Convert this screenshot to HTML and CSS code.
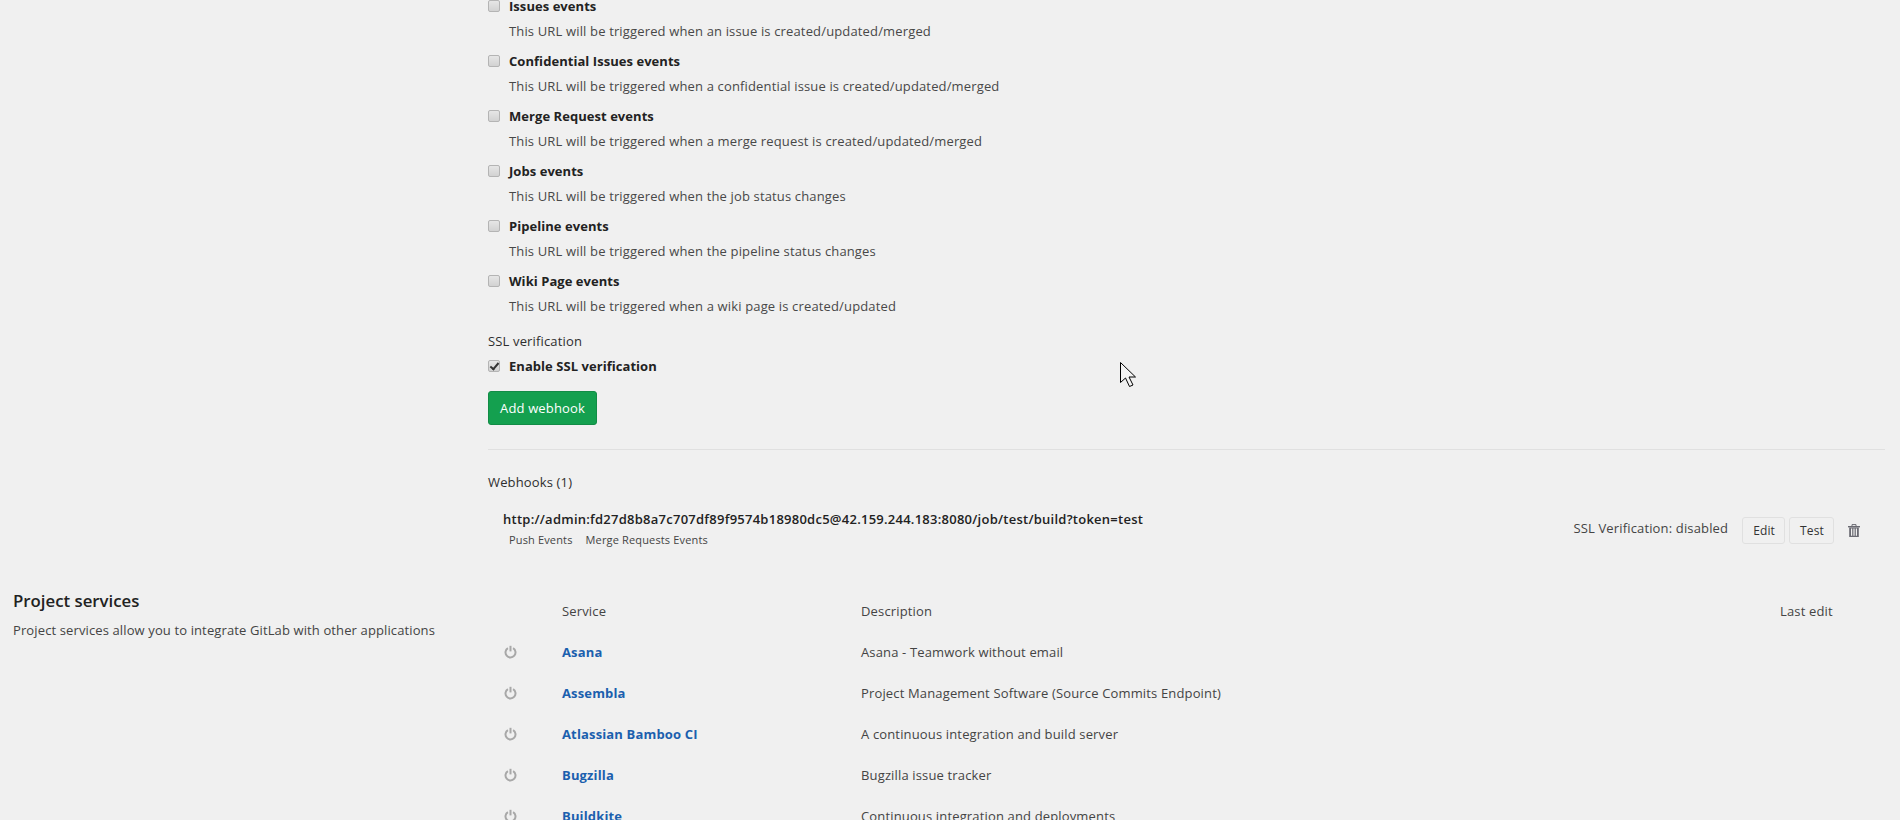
FILE: index.html
```html
<!DOCTYPE html>
<html lang="en">
<head>
    <meta charset="UTF-8">
    <meta name="viewport" content="width=device-width, initial-scale=1.0">
    <title>Integrations</title>
    <link rel="stylesheet" href="styles.css">
</head>
<body>

<div class="page">
    <form class="hook-form">
        <div class="event">
            <label><input type="checkbox"> Issues events</label>
            <p class="help">This URL will be triggered when an issue is created/updated/merged</p>
        </div>
        <div class="event">
            <label><input type="checkbox"> Confidential Issues events</label>
            <p class="help">This URL will be triggered when a confidential issue is created/updated/merged</p>
        </div>
        <div class="event">
            <label><input type="checkbox"> Merge Request events</label>
            <p class="help">This URL will be triggered when a merge request is created/updated/merged</p>
        </div>
        <div class="event">
            <label><input type="checkbox"> Jobs events</label>
            <p class="help">This URL will be triggered when the job status changes</p>
        </div>
        <div class="event">
            <label><input type="checkbox"> Pipeline events</label>
            <p class="help">This URL will be triggered when the pipeline status changes</p>
        </div>
        <div class="event">
            <label><input type="checkbox"> Wiki Page events</label>
            <p class="help">This URL will be triggered when a wiki page is created/updated</p>
        </div>

        <div class="ssl-title">SSL verification</div>
        <label><input type="checkbox" checked> Enable SSL verification</label>

        <button type="button" class="btn-create">Add webhook</button>
    </form>

    <hr class="divider">

    <div class="hooks">
        <h5>Webhooks (1)</h5>
        <div class="hook-row">
            <div class="hook-info">
                <div class="hook-url">http://admin:fd27d8b8a7c707df89f9574b18980dc5@42.159.244.183:8080/job/test/build?token=test</div>
                <div class="hook-tags">
                    <span>Push Events</span>
                    <span>Merge Requests Events</span>
                </div>
            </div>
            <div class="hook-actions">
                <span class="hook-ssl">SSL Verification: disabled</span>
                <a class="btn-small">Edit</a>
                <a class="btn-small">Test</a>
                <svg class="trash" width="12" height="13" viewBox="0 0 12 13">
                    <path d="M4 2V.6h4V2" fill="none" stroke="#6a6a72" stroke-width="1"/>
                    <rect x="0" y="2" width="12" height="1.4" fill="#6a6a72"/>
                    <path d="M1.2 3.4h9.6V13H1.2z M3 4.6V11.8h1.2V4.6z M5.4 4.6V11.8h1.2V4.6z M7.8 4.6V11.8H9V4.6z" fill="#6a6a72" fill-rule="evenodd"/>
                </svg>
            </div>
        </div>
    </div>

    <div class="services">
        <div class="services-side">
            <h4>Project services</h4>
            <p>Project services allow you to integrate GitLab with other applications</p>
        </div>
        <table class="services-table">
            <thead>
                <tr>
                    <th class="col-icon"></th>
                    <th class="col-name">Service</th>
                    <th>Description</th>
                    <th class="col-edit">Last edit</th>
                </tr>
            </thead>
            <tbody>
                <tr>
                    <td class="col-icon"><svg class="power" width="13" height="14" viewBox="0 0 13 14"><path d="M3.9 3.2a5 5 0 1 0 5.2 0" /><path d="M6.5 .8v5.6" /></svg></td>
                    <td><a href="#">Asana</a></td>
                    <td>Asana - Teamwork without email</td>
                    <td></td>
                </tr>
                <tr>
                    <td class="col-icon"><svg class="power" width="13" height="14" viewBox="0 0 13 14"><path d="M3.9 3.2a5 5 0 1 0 5.2 0" /><path d="M6.5 .8v5.6" /></svg></td>
                    <td><a href="#">Assembla</a></td>
                    <td>Project Management Software (Source Commits Endpoint)</td>
                    <td></td>
                </tr>
                <tr>
                    <td class="col-icon"><svg class="power" width="13" height="14" viewBox="0 0 13 14"><path d="M3.9 3.2a5 5 0 1 0 5.2 0" /><path d="M6.5 .8v5.6" /></svg></td>
                    <td><a href="#">Atlassian Bamboo CI</a></td>
                    <td>A continuous integration and build server</td>
                    <td></td>
                </tr>
                <tr>
                    <td class="col-icon"><svg class="power" width="13" height="14" viewBox="0 0 13 14"><path d="M3.9 3.2a5 5 0 1 0 5.2 0" /><path d="M6.5 .8v5.6" /></svg></td>
                    <td><a href="#">Bugzilla</a></td>
                    <td>Bugzilla issue tracker</td>
                    <td></td>
                </tr>
                <tr>
                    <td class="col-icon"><svg class="power" width="13" height="14" viewBox="0 0 13 14"><path d="M3.9 3.2a5 5 0 1 0 5.2 0" /><path d="M6.5 .8v5.6" /></svg></td>
                    <td><a href="#">Buildkite</a></td>
                    <td>Continuous integration and deployments</td>
                    <td></td>
                </tr>
            </tbody>
        </table>
    </div>
</div>

<svg class="cursor" width="17" height="26" viewBox="0 0 17 26">
    <path d="M.5 .5V20.5L5.5 16L9.5 24.5L13 23L9 15H15.5Z" fill="#f4f4f4" stroke="#000" stroke-width="1"/>
</svg>

</body>
</html>
```

FILE: styles.css
```css
html, body {
    height: 100%;
}
body {
    font-family: "Open Sans", Arial, sans-serif;
    font-size: 13px;
    line-height: 20px;
    letter-spacing: 0.15px;
    color: #2e2e2e;
    margin: 0;
    padding: 0;
    background-color: #f0f0f0;
    overflow: hidden;
    position: relative;
}
.page {
    margin-top: -4px;
}
.hook-form {
    padding-left: 488px;
}
.event {
    margin-bottom: 10px;
}
label {
    display: flex;
    align-items: center;
    gap: 9px;
    font-weight: 700;
    letter-spacing: 0.05px;
    color: #222;
}
input[type="checkbox"] {
    appearance: none;
    width: 12px;
    height: 12px;
    margin: 0;
    border: 1px solid #b4b4b4;
    border-radius: 2px;
    background: linear-gradient(#e6e6e6, #d2d2d2);
    position: relative;
}
input[type="checkbox"]:checked::after {
    content: "";
    position: absolute;
    left: 3px;
    top: 0;
    width: 3px;
    height: 7px;
    border-right: 2px solid #333;
    border-bottom: 2px solid #333;
    transform: rotate(40deg);
}
.help {
    margin: 5px 0 0 21px;
    color: #484848;
}
.ssl-title {
    margin: 15px 0 5px 0;
}
.btn-create {
    display: block;
    margin-top: 15px;
    height: 34px;
    width: 109px;
    padding: 0;
    font-family: inherit;
    font-size: 13px;
    letter-spacing: inherit;
    color: #fff;
    background-color: #14a04f;
    border: 1px solid #128c46;
    border-radius: 3px;
}
.divider {
    margin: 24px 15px 0 488px;
    border: none;
    border-top: 1px solid #e0e0e0;
}
.hooks {
    margin: 22px 15px 0 488px;
}
.hooks h5 {
    margin: 0;
    font-size: 13px;
    font-weight: 400;
}
.hook-row {
    display: flex;
    justify-content: space-between;
    padding: 17px 25px 0 15px;
}
.hook-url {
    font-weight: 600;
    letter-spacing: 0.25px;
    color: #222;
}
.hook-tags {
    display: flex;
    gap: 13px;
    padding-left: 6px;
    font-size: 11px;
    line-height: 21px;
    color: #444;
}
.hook-actions {
    display: flex;
    align-items: center;
    height: 27px;
    margin-top: 8px;
    color: #444;
}
.hook-ssl {
    margin-right: 14px;
    margin-bottom: 6px;
}
.btn-small {
    display: block;
    height: 25px;
    line-height: 25px;
    padding: 0 9px 0 10px;
    margin-right: 4px;
    font-size: 12px;
    color: #333;
    border: 1px solid #e0e0e0;
    border-radius: 3px;
}
.trash {
    margin-left: 10px;
}
.services {
    display: flex;
    margin-top: 41px;
    padding-right: 15px;
}
.services-side {
    width: 475px;
    margin-left: 13px;
    flex-shrink: 0;
}
.services-side h4 {
    margin: 0;
    font-size: 16.8px;
    font-weight: 600;
    letter-spacing: 0;
    color: #222;
}
.services-side p {
    margin: 9px 0 0 0;
    letter-spacing: 0.12px;
    color: #444;
}
.services-table {
    flex: 1;
    border-collapse: collapse;
}
.services-table th, .services-table td {
    height: 41px;
    padding: 0 12px;
    text-align: left;
    font-weight: 400;
    color: #444;
}
.services-table th {
    height: 40px;
}
.services-table .col-icon {
    width: 38px;
    padding-left: 16px;
    padding-right: 8px;
}
.services-table .col-name {
    width: 275px;
}
.services-table .col-edit {
    width: 93px;
}
.services-table a {
    font-weight: 700;
    color: #1b5fae;
    text-decoration: none;
}
.power {
    display: block;
    fill: none;
    stroke: #a8a8a8;
    stroke-width: 2;
}
.cursor {
    position: absolute;
    left: 1120px;
    top: 362px;
}
```
